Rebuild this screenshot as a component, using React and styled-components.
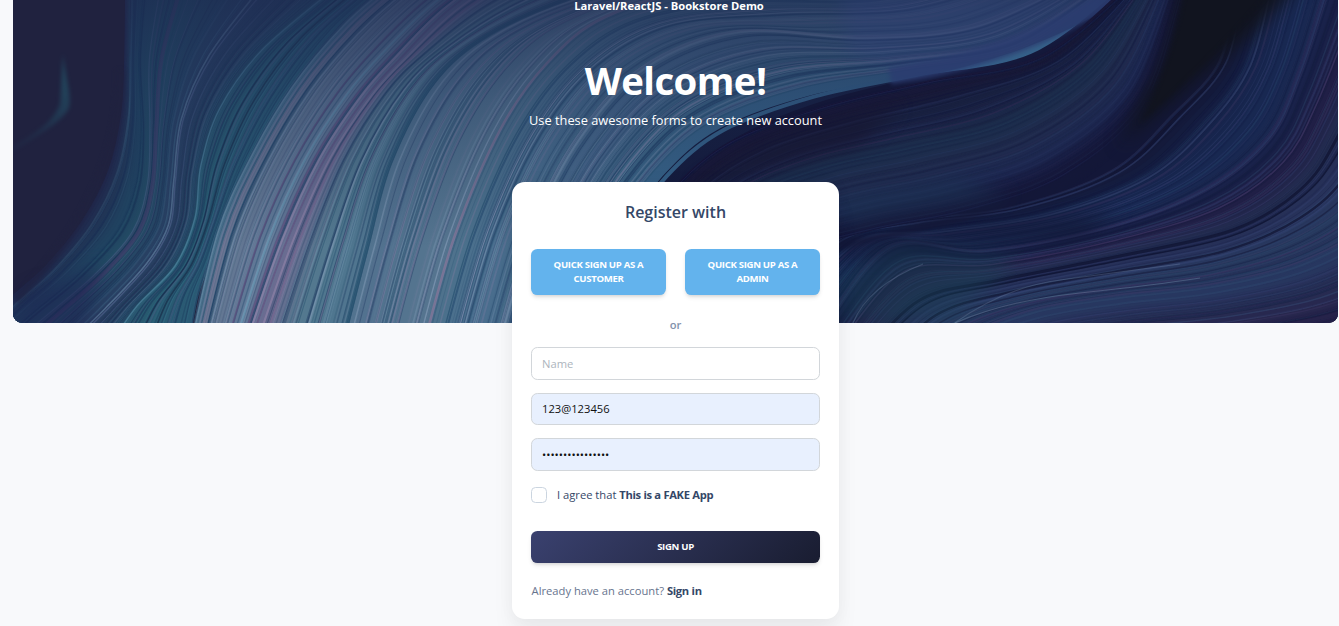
import React, { useMemo } from "react";
import styled, { createGlobalStyle } from "styled-components";

const GlobalStyle = createGlobalStyle`
  *, *::before, *::after { box-sizing: border-box; }
  body {
    margin: 0;
    background: #f8f9fb;
    color: #67748e;
    font-family: "Open Sans", sans-serif;
    overflow: hidden;
  }
`;

const Page = styled.main`
  position: relative;
  height: 626px;
  overflow: hidden;
  background: #f8f9fb;
`;

const NavBar = styled.nav`
  position: absolute;
  z-index: 2;
  top: 0;
  left: 0;
  right: 1px;
  text-align: center;
`;

const Brand = styled.a`
  display: block;
  font-size: 11.2px;
  line-height: 12px;
  font-weight: 700;
  color: #fff;
`;

const Hero = styled.header`
  position: relative;
  isolation: isolate;
  height: 323px;
  margin: 0 1px 0 13px;
  padding-top: 56px;
  border-radius: 0 0 9.6px 9.6px;
  overflow: hidden;
  text-align: center;
  color: #fff;
`;

const Artwork = styled.svg`
  position: absolute;
  inset: 0;
  z-index: -1;
  width: 100%;
  height: 100%;
`;

const HeroTitle = styled.h1`
  margin: 0 0 6px;
  font-size: 38.4px;
  line-height: 48px;
  font-weight: 700;
  letter-spacing: -0.6px;
`;

const HeroText = styled.p`
  margin: 0;
  font-size: 12.8px;
  line-height: 20px;
`;

const Card = styled.section`
  position: relative;
  width: 327px;
  height: 437px;
  margin: -141px auto 0;
  left: 6px;
  padding: 19px;
  border-radius: 12.8px;
  background: #fff;
  box-shadow: 0 18px 22px rgba(0, 0, 0, 0.05), 0 0 18px rgba(0, 0, 0, 0.035);
`;

const CardTitle = styled.h5`
  margin: 0 0 26px;
  font-size: 16px;
  line-height: 22px;
  font-weight: 600;
  text-align: center;
  color: #344767;
`;

const QuickRow = styled.div`
  display: grid;
  grid-template-columns: 1fr 1fr;
  gap: 19px;
`;

const Button = styled.button`
  display: block;
  width: 100%;
  height: ${(p) => (p.$tall ? "46px" : "32px")};
  padding: 0 16px;
  border: 0;
  border-radius: 6.4px;
  background: ${(p) =>
    p.$tall ? "#63b3ed" : "linear-gradient(135deg, #3a416f 0%, #141727 115%)"};
  box-shadow: 0 3px 5px -1px rgba(0, 0, 0, 0.12), 0 2px 3px -1px rgba(0, 0, 0, 0.08);
  color: #fff;
  font-family: inherit;
  font-size: 9.6px;
  line-height: 14px;
  font-weight: 700;
  letter-spacing: -0.32px;
  text-transform: uppercase;
`;

const Divider = styled.p`
  margin: 21px 0 13px;
  font-size: 11.2px;
  line-height: 18px;
  font-weight: 600;
  text-align: center;
  color: #8392ab;
`;

const Fields = styled.div`
  display: flex;
  flex-direction: column;
  gap: 13px;
`;

const Input = styled.input`
  display: block;
  width: 100%;
  height: ${(p) => (p.$short ? "32px" : "33px")};
  padding: ${(p) => (p.$short ? "0 10px 2px" : "0 10px")};
  border: 1px solid #d2d6da;
  border-radius: 6.4px;
  outline: 0;
  background: ${(p) => (p.$filled ? "#e8f0fe" : "#fff")};
  color: #111;
  font-family: inherit;
  font-size: 11.2px;

  &::placeholder {
    color: #adb5bd;
    opacity: 1;
  }
`;

const Agreement = styled.label`
  display: flex;
  align-items: center;
  gap: 10px;
  margin: 15px 0 27px;
  height: 18px;
  font-size: 11.2px;
  line-height: 16px;
  color: #344767;

  strong {
    letter-spacing: -0.32px;
  }
`;

const Checkbox = styled.input`
  appearance: none;
  width: 16px;
  height: 16px;
  margin: 0;
  border: 1px solid #cbd5e0;
  border-radius: 4.5px;
  background: #fff;
`;

const SignIn = styled.p`
  margin: 19px 0 0;
  padding-left: 0.6px;
  font-size: 11.2px;
  line-height: 18px;
  color: #67748e;

  a {
    color: #344767;
    font-weight: 700;
    letter-spacing: -0.3px;
  }
`;

/* Each ribbon is a set of guide curves; strands are blended between them. */
const RIBBONS = {
  left: {
    strands: 110,
    noise: 0.36,
    from: 0.06,
    to: 1,
    tints: ["#0d1c48", "#102c50", "#4b7693", "#3d7f96", "#5b5f8c", "#18234c"],
    colors: ["#20264a", "#20405f", "#234e66", "#293e62", "#27405f", "#285a70", "#2a5a74"],
    guides: [
      [[127, -12], [127, 50], [123, 110], [108, 170], [80, 222], [43, 268], [8, 300], [-20, 330]],
      [[148, -12], [142, 60], [146, 130], [144, 185], [128, 232], [88, 276], [42, 314], [10, 340]],
      [[265, -12], [212, 55], [183, 118], [175, 180], [170, 225], [149, 263], [108, 308], [70, 345]],
      [[335, -12], [262, 50], [220, 108], [201, 165], [195, 218], [175, 266], [137, 306], [110, 345]],
      [[385, -12], [342, 26], [291, 92], [250, 163], [222, 226], [210, 262], [200, 296], [192, 345]],
    ],
  },
  main: {
    strands: 290,
    noise: 0.42,
    from: 0,
    to: 0.96,
    tints: ["#0d2450", "#153c5e", "#92a7c3", "#7f9fb8", "#8b80a8", "#1b4668"],
    colors: ["#4d7590", "#647792", "#5f7897", "#6b6b90", "#54798f", "#4e768f", "#53728f", "#50738e", "#587590", "#4b708b", "#4c7090", "#476c8b", "#4a688c", "#3f6886", "#36638a"],
    guides: [
      [[188, 340], [213, 233], [243, 163], [287, 87], [340, 23], [385, -15], [430, -45], [480, -65]],
      [[252, 340], [288, 240], [326, 158], [367, 97], [400, 60], [452, 8], [520, -35], [600, -55]],
      [[343, 340], [367, 247], [390, 163], [433, 83], [490, 34], [580, -5], [710, -38], [850, -50]],
      [[425, 340], [455, 235], [500, 130], [547, 63], [605, 17], [705, -10], [840, -8], [980, -30]],
      [[500, 340], [535, 225], [580, 138], [645, 68], [740, 32], [865, 38], [975, 27], [1080, -20]],
      [[590, 340], [630, 240], [673, 180], [730, 135], [820, 102], [920, 78], [1035, 54], [1122, -12]],
    ],
  },
  middle: {
    strands: 90,
    noise: 0.28,
    from: 0,
    to: 1,
    tints: ["#10143a", "#131536", "#2a4066", "#2d3c68", "#332a54"],
    colors: ["#18183a", "#181a38", "#18203f", "#1b2345", "#1c2e4d", "#202b4d", "#1d2850", "#15173a"],
    guides: [
      [[593, 345], [634, 245], [677, 185], [734, 140], [824, 107], [924, 83], [1039, 59], [1126, -8]],
      [[620, 340], [680, 245], [745, 190], [820, 160], [900, 142], [1000, 117], [1085, 65], [1143, -12]],
      [[650, 350], [725, 295], [800, 252], [880, 229], [970, 211], [1065, 176], [1145, 105], [1184, -12]],
    ],
  },
  right: {
    strands: 170,
    noise: 0.34,
    from: 0,
    to: 1,
    tints: ["#0c1032", "#10173c", "#0c1838", "#34557a", "#3a4a7c", "#463b6b"],
    colors: ["#131634", "#16234a", "#192a54", "#192148", "#201f46", "#232d50", "#28335c", "#283b60", "#273760", "#27294f", "#251d46"],
    guides: [
      [[1235, -12], [1218, 62], [1170, 116], [1110, 171], [1010, 207], [910, 220], [840, 238], [780, 290]],
      [[1325, -12], [1298, 72], [1268, 136], [1205, 188], [1110, 226], [985, 250], [890, 245], [820, 330]],
      [[1390, 20], [1338, 136], [1300, 190], [1233, 230], [1120, 256], [1000, 280], [920, 300], [860, 360]],
      [[1430, 150], [1370, 220], [1300, 260], [1210, 283], [1115, 294], [1030, 309], [960, 338], [900, 390]],
      [[1470, 280], [1400, 315], [1340, 336], [1250, 350], [1160, 360], [1080, 372], [1000, 400], [940, 440]],
    ],
  },
};

const ACCENTS = [
  { ribbon: "left", at: 0.49, color: "#6583a3", width: 1.6 },
  { ribbon: "left", at: 0.505, color: "#53658f", width: 1.4 },
  { ribbon: "left", at: 0.75, color: "#5289a4", width: 1.4 },
  { ribbon: "left", at: 0.83, color: "#152347", width: 1.4 },
  { ribbon: "left", at: 0.87, color: "#152845", width: 1.6 },
  { ribbon: "left", at: 0.32, color: "#443d6b", width: 4 },
  { ribbon: "main", at: 0.04, color: "#787997", width: 5 },
  { ribbon: "main", at: 0.125, color: "#5c4c7b", width: 2 },
  { ribbon: "main", at: 0.15, color: "#6698b2", width: 2 },
  { ribbon: "main", at: 0.172, color: "#604c7b", width: 2 },
  { ribbon: "main", at: 0.185, color: "#8f83a7", width: 2 },
  { ribbon: "main", at: 0.198, color: "#604c7b", width: 2 },
  { ribbon: "main", at: 0.213, color: "#8f83a7", width: 2 },
  { ribbon: "main", at: 0.228, color: "#77638d", width: 2 },
  { ribbon: "main", at: 0.4, color: "#23516f", width: 4 },
  { ribbon: "main", at: 0.6, color: "#8d779b", width: 2.5 },
  { ribbon: "main", at: 0.65, color: "#254b70", width: 2 },
  { ribbon: "main", at: 0.79, color: "#7184a6", width: 1.5 },
  { ribbon: "main", at: 0.83, color: "#254768", width: 1.6 },
  { ribbon: "right", at: 0.5, color: "#0d102c", width: 3 },
  { ribbon: "right", at: 0.53, color: "#0d112e", width: 1.5 },
  { ribbon: "right", at: 0.6, color: "#10132f", width: 2.5 },
  { ribbon: "right", at: 0.37, color: "#403765", width: 1.5 },
  { ribbon: "right", at: 0.64, color: "#171d3d", width: 1.4 },
];

function random(seed) {
  let s = seed;
  return () => {
    s = (s * 16807) % 2147483647;
    return s / 2147483647;
  };
}

function curveAt(guides, t) {
  const pos = t * (guides.length - 1);
  const i = Math.min(Math.floor(pos), guides.length - 2);
  const f = pos - i;
  const pts = guides[i].map((p, n) => [0, 1].map((axis) => p[axis] + (guides[i + 1][n][axis] - p[axis]) * f));
  let d = `M${pts[0][0].toFixed(1)} ${pts[0][1].toFixed(1)}`;
  for (let k = 0; k < pts.length - 1; k++) {
    const a = pts[Math.max(0, k - 1)];
    const b = pts[k];
    const c = pts[k + 1];
    const e = pts[Math.min(pts.length - 1, k + 2)];
    const v = [
      b[0] + (c[0] - a[0]) / 6, b[1] + (c[1] - a[1]) / 6,
      c[0] - (e[0] - b[0]) / 6, c[1] - (e[1] - b[1]) / 6,
      c[0], c[1],
    ].map((x) => x.toFixed(1));
    d += `C${v.join(" ")}`;
  }
  return d;
}

function colorAt(colors, t) {
  const pos = t * (colors.length - 1);
  const i = Math.min(Math.floor(pos), colors.length - 2);
  const f = pos - i;
  const rgb = (hex) => [1, 3, 5].map((n) => parseInt(hex.slice(n, n + 2), 16));
  const a = rgb(colors[i]);
  const b = rgb(colors[i + 1]);
  return `rgb(${a.map((v, n) => Math.round(v + (b[n] - v) * f)).join(",")})`;
}

function Ribbon({ name, seed }) {
  const { guides, colors, strands, noise, tints, from, to } = RIBBONS[name];
  const lines = useMemo(() => {
    const rnd = random(seed);
    const base = Array.from({ length: 64 }, (_, i) => {
      const t = i / 63;
      const inset = 0.015 + t * 0.97;
      return { d: curveAt(guides, inset), stroke: colorAt(colors, t), width: i === 0 || i === 63 ? 4 : 9, opacity: 1 };
    });
    const fine = Array.from({ length: strands }, () => {
      const t = from + rnd() * (to - from);
      return {
        d: curveAt(guides, t),
        stroke: tints[Math.floor(rnd() * tints.length)],
        width: 0.5 + rnd() * 1.5,
        opacity: (0.15 + rnd() * 0.85) * noise,
      };
    });
    return [...base, ...fine];
  }, [guides, colors, strands, noise, tints, from, to, seed]);
  return (
    <g fill="none">
      {lines.map((l, i) => (
        <path key={i} d={l.d} stroke={l.stroke} strokeWidth={l.width} opacity={l.opacity} />
      ))}
      {ACCENTS.filter((a) => a.ribbon === name).map((a) => (
        <path key={a.at} d={curveAt(guides, a.at)} stroke={a.color} strokeWidth={a.width} opacity="0.65" />
      ))}
    </g>
  );
}

function WaveArtwork() {
  return (
    <Artwork viewBox="13 0 1325 323" preserveAspectRatio="none" aria-hidden="true">
      <defs>
        <linearGradient id="topShade" x1="0" y1="0" x2="0" y2="1">
          <stop offset="0" stopColor="#1c2a50" stopOpacity="0.72" />
          <stop offset="0.3" stopColor="#1c2f55" stopOpacity="0.38" />
          <stop offset="0.75" stopColor="#1c3355" stopOpacity="0" />
        </linearGradient>
        <linearGradient id="leaf" x1="0" y1="1" x2="1" y2="0">
          <stop offset="0" stopColor="#20314e" stopOpacity="0.3" />
          <stop offset="1" stopColor="#24566a" />
        </linearGradient>
        <filter id="soft" x="-30%" y="-30%" width="160%" height="160%" colorInterpolationFilters="sRGB">
          <feGaussianBlur stdDeviation="9" />
        </filter>
        <filter id="edge" x="-20%" y="-20%" width="140%" height="140%" colorInterpolationFilters="sRGB">
          <feGaussianBlur stdDeviation="2" />
        </filter>
      </defs>
      <rect x="13" width="1325" height="323" fill="#20223f" />
      <rect x="640" width="698" height="323" fill="#131738" />
      <path d="M63 54C65 78 72 94 69 108C60 124 38 134 13 152L13 146C34 134 52 124 60 104Z" fill="url(#leaf)" filter="url(#edge)" opacity=".85" />
      <Ribbon name="left" seed={71} />
      <path d="M-10 345L30 290L105 265L80 345Z" fill="#1d2350" opacity=".6" filter="url(#soft)" />
      <path d="M120 70Q124 190 16 300" fill="none" stroke="#20223f" strokeWidth="8" opacity=".6" filter="url(#edge)" />
      <Ribbon name="main" seed={923} />
      <path d="M130 0H1120Q1040 54 907 80Q730 115 673 190L620 330H130Z" fill="url(#topShade)" />
      <path d="M840 -10H1120Q1050 54 920 78L850 55Z" fill="#303f78" opacity=".35" filter="url(#soft)" />
      <path d="M890 76Q1030 54 1116 -8" fill="none" stroke="#2b3c70" strokeWidth="17" opacity=".8" filter="url(#edge)" />
      <Ribbon name="right" seed={311} />
      <path d="M840 245L1000 222L1120 212L1080 238L960 246L840 260Z" fill="#111736" opacity=".8" filter="url(#soft)" />
      <path d="M838 275L900 245L1020 258L950 323H838Z" fill="#184657" opacity=".38" filter="url(#soft)" />
      <Ribbon name="middle" seed={555} />
      <path d="M840 245Q960 222 1060 185Q1130 140 1150 90" fill="none" stroke="#141838" strokeWidth="9" opacity=".75" filter="url(#edge)" />
      <path d="M690 190Q770 130 900 106L860 145L760 170Z" fill="#17152f" opacity=".6" filter="url(#soft)" />
      <path d="M838 195L960 180L1010 195L838 228Z" fill="#1c3552" opacity=".5" filter="url(#soft)" />
      <path d="M1182 -30H1310Q1260 30 1230 52Q1160 112 1120 146L1148 90Q1172 50 1182 -30Z" fill="#11141f" filter="url(#soft)" />
      <path d="M1186 -10H1270Q1230 40 1140 124Q1170 70 1186 -10Z" fill="#11141f" filter="url(#edge)" />
      <g fill="none" stroke="#7890ad" strokeWidth="1.2">
        <path d="M945 330Q1000 288 1060 280T1180 264" opacity=".3" />
        <path d="M955 323Q1005 301 1080 293T1200 278" opacity=".38" />
        <path d="M853 323Q868 286 923 264" opacity=".3" />
      </g>
    </Artwork>
  );
}

export default function App() {
  return (
    <Page>
      <GlobalStyle />
      <NavBar>
        <Brand>Laravel/ReactJS - Bookstore Demo</Brand>
      </NavBar>
      <Hero>
        <WaveArtwork />
        <HeroTitle>Welcome!</HeroTitle>
        <HeroText>Use these awesome forms to create new account</HeroText>
      </Hero>
      <Card>
        <CardTitle>Register with</CardTitle>
        <QuickRow>
          <Button $tall>Quick sign up as a customer</Button>
          <Button $tall>Quick sign up as a admin</Button>
        </QuickRow>
        <Divider>or</Divider>
        <Fields>
          <Input placeholder="Name" />
          <Input $filled $short defaultValue="123@123456" />
          <Input $filled type="password" defaultValue="1234567890123456" />
        </Fields>
        <Agreement>
          <Checkbox type="checkbox" />
          <span>
            I agree that <strong>This is a FAKE App</strong>
          </span>
        </Agreement>
        <Button>Sign up</Button>
        <SignIn>
          Already have an account? <a>Sign in</a>
        </SignIn>
      </Card>
    </Page>
  );
}
